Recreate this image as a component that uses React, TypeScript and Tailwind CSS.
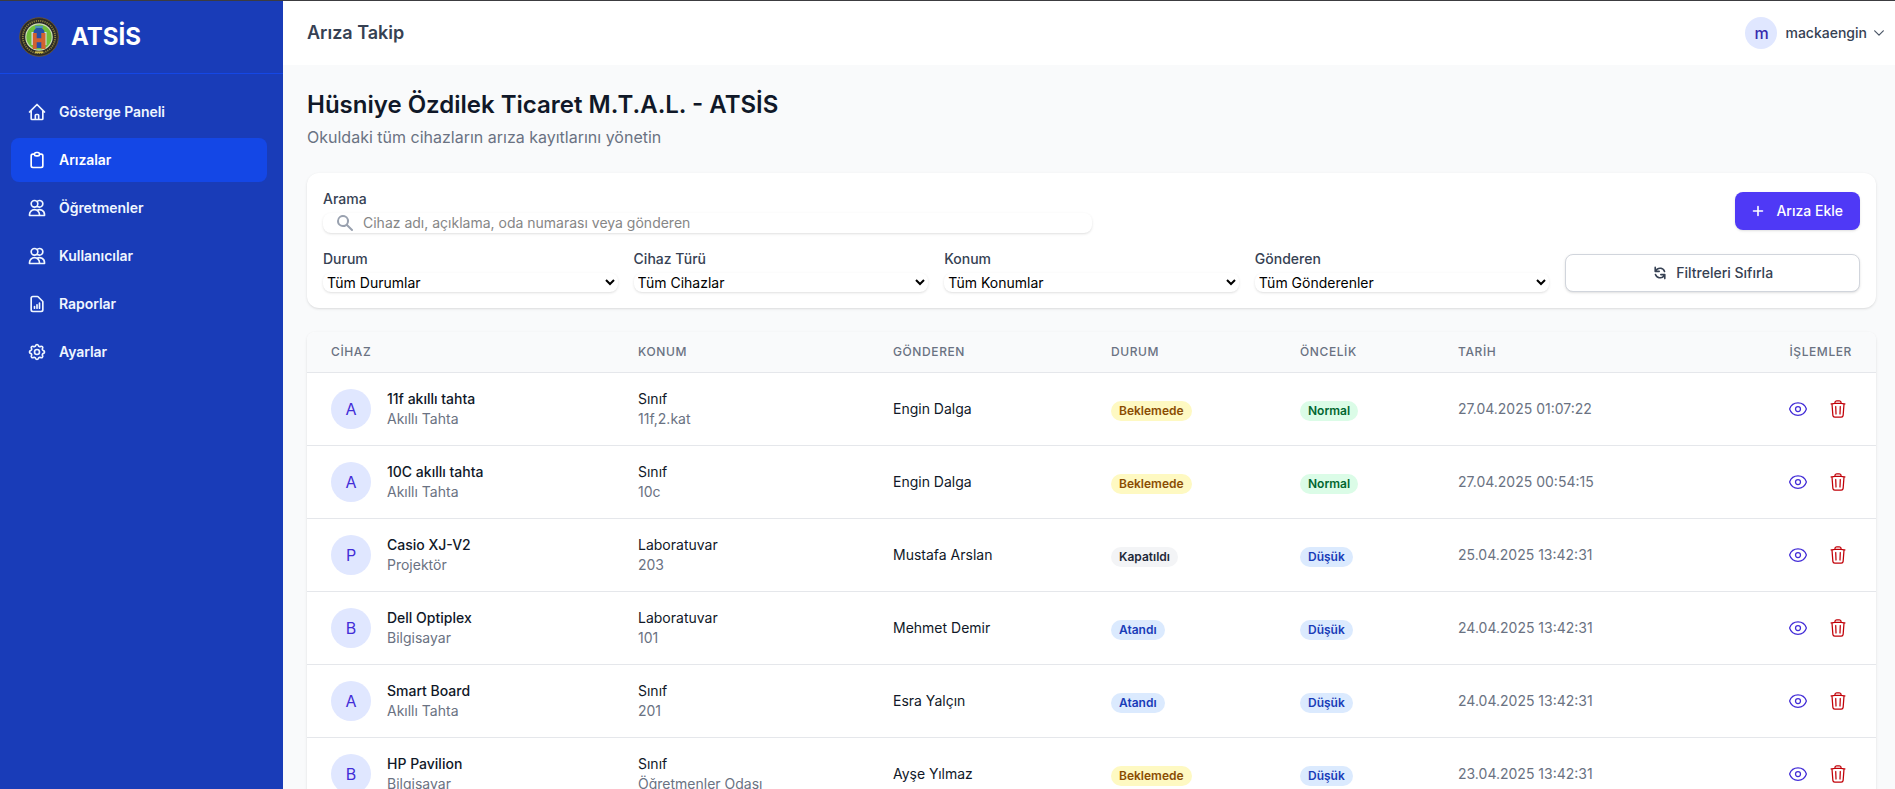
import type { ReactNode } from "react";
import {
  HiOutlineHome,
  HiOutlineClipboard,
  HiOutlineUsers,
  HiOutlineDocumentReport,
  HiOutlineCog,
  HiRefresh,
  HiSearch,
} from "react-icons/hi";
import { HiOutlineEye, HiOutlineTrash } from "react-icons/hi2";
import type { IconType } from "react-icons";

const nav: { label: string; icon: IconType; active?: boolean }[] = [
  { label: "Gösterge Paneli", icon: HiOutlineHome },
  { label: "Arızalar", icon: HiOutlineClipboard, active: true },
  { label: "Öğretmenler", icon: HiOutlineUsers },
  { label: "Kullanıcılar", icon: HiOutlineUsers },
  { label: "Raporlar", icon: HiOutlineDocumentReport },
  { label: "Ayarlar", icon: HiOutlineCog },
];

const filters = [
  { label: "Durum", value: "Tüm Durumlar" },
  { label: "Cihaz Türü", value: "Tüm Cihazlar" },
  { label: "Konum", value: "Tüm Konumlar" },
  { label: "Gönderen", value: "Tüm Gönderenler" },
];

const rows = [
  ["11f akıllı tahta", "Akıllı Tahta", "Sınıf", "11f,2.kat", "Engin Dalga", "Beklemede", "Normal", "27.04.2025 01:07:22"],
  ["10C akıllı tahta", "Akıllı Tahta", "Sınıf", "10c", "Engin Dalga", "Beklemede", "Normal", "27.04.2025 00:54:15"],
  ["Casio XJ-V2", "Projektör", "Laboratuvar", "203", "Mustafa Arslan", "Kapatıldı", "Düşük", "25.04.2025 13:42:31"],
  ["Dell Optiplex", "Bilgisayar", "Laboratuvar", "101", "Mehmet Demir", "Atandı", "Düşük", "24.04.2025 13:42:31"],
  ["Smart Board", "Akıllı Tahta", "Sınıf", "201", "Esra Yalçın", "Atandı", "Düşük", "24.04.2025 13:42:31"],
  ["HP Pavilion", "Bilgisayar", "Sınıf", "Öğretmenler Odası", "Ayşe Yılmaz", "Beklemede", "Düşük", "23.04.2025 13:42:31"],
];

const badgeColors: Record<string, string> = {
  Beklemede: "bg-yellow-100 text-yellow-800",
  Kapatıldı: "bg-gray-100 text-gray-800",
  Atandı: "bg-blue-100 text-blue-800",
  Normal: "bg-green-100 text-green-800",
  Düşük: "bg-blue-100 text-blue-800",
};

function Badge({ children }: { children: string }) {
  return (
    <span className={`inline-flex rounded-full px-2 text-xs leading-5 font-semibold ${badgeColors[children]}`}>
      {children}
    </span>
  );
}

function Logo() {
  return (
    <svg viewBox="0 0 40 40" className="size-10 shrink-0">
      <circle cx="20" cy="20" r="19.3" fill="#2b2a26" stroke="#6b5630" strokeWidth="0.9" />
      <circle cx="20" cy="20" r="16.2" fill="none" stroke="#b5a845" strokeWidth="1.8" strokeDasharray="1.2 1" opacity="0.7" />
      <circle cx="20" cy="20" r="13.8" fill="#cfdcb8" />
      <circle cx="20" cy="20" r="12.6" fill="#6fbf3a" />
      <path d="M12.500 15h15v13h-15z" fill="#d5e3e6" />
      <path d="M14.500 15.500a5.500 5 0 0 1 11 0V31h-11z" fill="#2450a8" />
      <path d="M16 8.800h8v2.200h-8z" fill="#4f93b5" />
      <path d="M13.800 16h3.900v5.200h4.600V16h4.200v16h-4.200v-6.800h-4.600V32h-3.900z" fill="#d2622f" />
      <path d="M16 35.300h8" stroke="#c9b84a" strokeWidth="1.800" />
    </svg>
  );
}

function Th({ children, className }: { children: ReactNode; className: string }) {
  return (
    <th className={`px-6 py-3 text-xs font-medium tracking-wider text-gray-500 ${className}`}>{children}</th>
  );
}

export default function App() {
  return (
    <div className="flex h-[789px] flex-col overflow-hidden border-t border-[#3c3c40] bg-gray-50 font-['Inter',sans-serif]">
      <div className="flex min-h-0 flex-1">
        <aside className="flex w-[283px] shrink-0 flex-col bg-blue-800">
          <div className="flex items-center gap-3 border-b border-blue-700 py-4 pl-[19px]">
            <Logo />
            <span className="text-2xl font-bold text-white">ATSİS</span>
          </div>
          <nav className="flex flex-col gap-1 py-4 pr-4 pl-[11px]">
            {nav.map(({ label, icon: Icon, active }) => (
              <a
                key={label}
                className={`flex h-11 items-center gap-3 rounded-lg px-4 text-sm font-semibold tracking-[-0.05px] ${
                  active ? "bg-blue-700 text-white" : "text-blue-50"
                }`}
              >
                <Icon className="size-5" />
                {label}
              </a>
            ))}
          </nav>
        </aside>

        <div className="flex min-w-0 flex-1 flex-col">
          <header className="flex h-16 shrink-0 items-center justify-between bg-white pr-2 pl-6">
            <h2 className="text-lg font-semibold text-gray-700">Arıza Takip</h2>
            <button className="flex items-center text-sm font-medium text-gray-700">
              <span className="mr-2 flex size-8 items-center justify-center rounded-full bg-indigo-100 text-base font-medium text-indigo-800">
                m
              </span>
              mackaengin
              <svg viewBox="0 0 16 16" className="ml-1 size-4 text-gray-600" fill="none" stroke="currentColor">
                <path d="M3.700 5.800 8 10.200l4.300-4.400" strokeWidth="1.200" strokeLinecap="round" strokeLinejoin="round" />
              </svg>
            </button>
          </header>

          <main className="flex min-h-0 flex-1 flex-col gap-6 overflow-hidden pt-6 pr-[19px] pl-6">
            <div className="shrink-0">
              <h1 className="text-2xl font-semibold text-gray-900">Hüsniye Özdilek Ticaret M.T.A.L. - ATSİS</h1>
              <p className="mt-1 text-base text-gray-500">Okuldaki tüm cihazların arıza kayıtlarını yönetin</p>
            </div>

            <section className="flex shrink-0 flex-col gap-4 rounded-xl bg-white p-4 shadow-sm">
              <div className="flex items-center justify-between">
                <div className="w-1/2">
                  <label className="block text-sm font-medium text-gray-700">Arama</label>
                  <div className="mt-1 flex h-5 items-center gap-2 rounded-lg pl-3 shadow-sm">
                    <HiSearch className="size-5 text-gray-400" />
                    <input
                      className="h-5 flex-1 text-sm placeholder:text-[#868686] focus:outline-none"
                      placeholder="Cihaz adı, açıklama, oda numarası veya gönderen"
                    />
                  </div>
                </div>
                <button className="flex h-[38px] items-center rounded-lg border border-transparent bg-indigo-600 px-4 text-sm font-medium text-white shadow-sm">
                  <svg viewBox="0 0 20 20" className="mr-2 -ml-1 size-5" fill="none" stroke="currentColor">
                    <path d="M10 5.500v9M5.500 10h9" strokeWidth="1.600" strokeLinecap="round" />
                  </svg>
                  Arıza Ekle
                </button>
              </div>
              <div className="grid h-[43px] grid-cols-5 items-end gap-4">
                {filters.map((f) => (
                  <div key={f.label}>
                    <label className="block text-sm font-medium text-gray-700">{f.label}</label>
                    <select className="mt-1 block h-[19px] w-full rounded-lg text-sm text-black shadow-sm">
                      <option>{f.value}</option>
                    </select>
                  </div>
                ))}
                <button className="flex h-[38px] items-center justify-center gap-2 rounded-lg border border-gray-300 bg-white text-sm font-medium text-gray-700 shadow-sm">
                  <HiRefresh className="size-4" />
                  Filtreleri Sıfırla
                </button>
              </div>
            </section>

            <section className="shrink-0 overflow-hidden rounded-lg bg-white shadow-sm">
              <table className="w-full table-fixed border-collapse text-left">
                <thead className="bg-gray-50">
                  <tr className="h-10">
                    <Th className="w-[307px]">CİHAZ</Th>
                    <Th className="w-[255px]">KONUM</Th>
                    <Th className="w-[218px]">GÖNDEREN</Th>
                    <Th className="w-[189px]">DURUM</Th>
                    <Th className="w-[158px]">ÖNCELİK</Th>
                    <Th className="">TARİH</Th>
                    <Th className="w-[200px] text-right">İŞLEMLER</Th>
                  </tr>
                </thead>
                <tbody>
                  {rows.map(([name, type, place, room, sender, status, priority, date]) => (
                    <tr key={name} className="border-t border-gray-200 whitespace-nowrap">
                      <td className="px-6 py-4">
                        <div className="flex items-center gap-4">
                          <span className="flex size-10 items-center justify-center rounded-full bg-indigo-100 text-base text-indigo-700">
                            {type[0]}
                          </span>
                          <div className="text-sm">
                            <div className="font-medium text-gray-900">{name}</div>
                            <div className="text-gray-500">{type}</div>
                          </div>
                        </div>
                      </td>
                      <td className="px-6 py-4 text-sm">
                        <div className="text-gray-900">{place}</div>
                        <div className="text-gray-500">{room}</div>
                      </td>
                      <td className="px-6 py-4 text-sm text-gray-900">{sender}</td>
                      <td className="px-6 py-4">
                        <Badge>{status}</Badge>
                      </td>
                      <td className="px-6 py-4">
                        <Badge>{priority}</Badge>
                      </td>
                      <td className="px-6 py-4 text-sm text-gray-500">{date}</td>
                      <td className="px-6 py-4">
                        <div className="flex justify-end gap-3">
                          <button className="p-1 text-indigo-700">
                            <HiOutlineEye className="size-5" />
                          </button>
                          <button className="p-1 text-red-700">
                            <HiOutlineTrash className="size-5" />
                          </button>
                        </div>
                      </td>
                    </tr>
                  ))}
                </tbody>
              </table>
            </section>
          </main>
        </div>
      </div>
    </div>
  );
}
